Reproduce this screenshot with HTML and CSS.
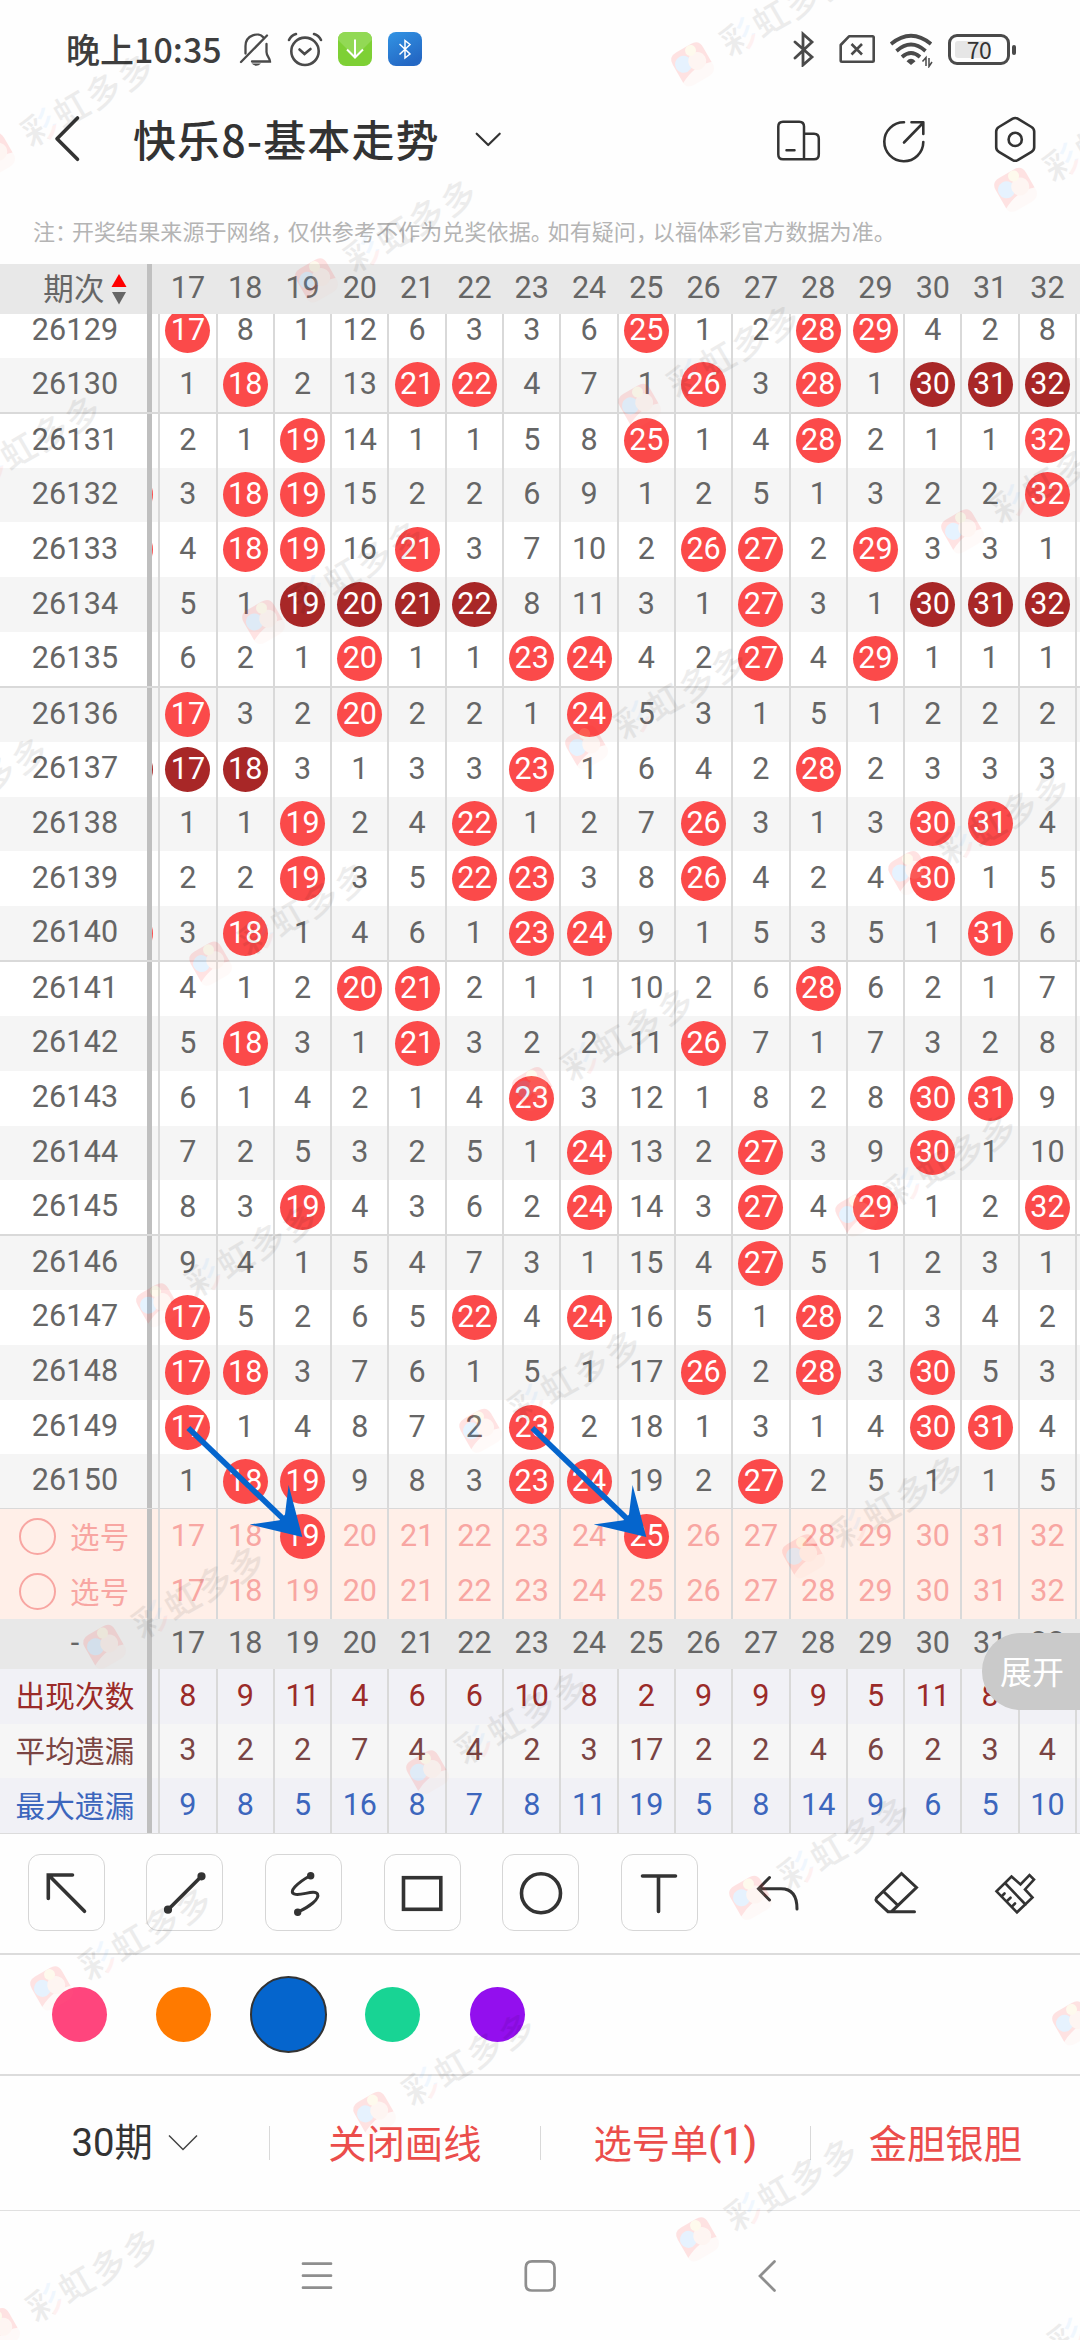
FILE: index.html
```html
<!DOCTYPE html>
<html lang="zh-CN">
<head>
<meta charset="utf-8">
<title>快乐8-基本走势</title>
<link rel="stylesheet" href="styles.css">
</head>
<body>
<div class="screen">
  <header class="status">
    <span class="clock">晚上10:35</span>
    <svg class="s-bell" width="36" height="38" viewBox="238 30 36 38" fill="none" stroke="#4a4a4a" stroke-width="2.3" stroke-linecap="round"><path d="M241 62 267 35.5M245.500 53.500V46C245.500 34.500 259 32 263 37M266.500 44V52C266.500 56 270 58 270 61.500H252"/><path d="M251.500 63.500H261Q256.300 68 251.500 63.500Z" fill="#4a4a4a" stroke="none"/></svg>
    <svg class="s-alarm" width="38" height="38" viewBox="286 31 38 38" fill="none" stroke="#4a4a4a" stroke-width="2.6" stroke-linecap="round"><circle cx="305" cy="52.300" r="13.700"/><path d="M299.500 50.500 304.500 55 310.500 50M289 41 Q291 36.500 296 35M321 41Q319 36.500 314 35"/></svg>
    <svg class="s-down" width="34" height="34" viewBox="0 0 34 34"><rect width="34" height="34" rx="8" fill="#7ed035"/><path d="M0 8Q0 0 8 0H26Q34 0 34 8L17 25Z" fill="#92d955"/><path d="M17 7.500V25M9 17.500 17 25.500 25 17.500" fill="none" stroke="#fff" stroke-width="2"/></svg>
    <svg class="s-bt" width="34" height="34" viewBox="0 0 34 34"><defs><linearGradient id="btg" x2="0.500" y2="1"><stop stop-color="#3294e4"/><stop offset="1" stop-color="#2468c4"/></linearGradient></defs><rect width="34" height="34" rx="8" fill="url(#btg)"/><path d="M11.500 12 22 22 17 26V8.500L22 12.500 11.500 22.500" fill="none" stroke="#fff" stroke-width="1.500"/></svg>
    <svg class="s-bt2" width="26" height="36" viewBox="790 31 26 36" fill="none" stroke="#4a4a4a" stroke-width="2.800" stroke-linecap="round"><path d="M795 42 812 57 803 65V34L812 42 795 58"/></svg>
    <svg class="s-sim" width="38" height="30" viewBox="838 34 38 30" fill="none" stroke="#4a4a4a" stroke-width="2.600" stroke-linejoin="round"><path d="M849 36.300H872.500Q873.700 36.300 873.700 37.500V60.500Q873.700 61.700 872.500 61.700H842Q840.700 61.700 840.700 60.500V45ZM851.500 44 862 54.500M862 44 851.500 54.500"/></svg>
    <svg class="s-wifi" width="44" height="36" viewBox="889 32 44 36" fill="none" stroke="#4a4a4a" stroke-width="3.700"><path d="M891 44Q911 27.500 931 44M896.500 51Q911 38 925.500 51M902 57Q911 49 920 57"/><path d="M906.500 61.200Q911 56.500 915.500 61.200L911 65Z" fill="#4a4a4a" stroke="none"/><path d="M926 66V57.500L922.500 61.500M929 58V66.500L932 62" stroke-width="1.500"/></svg>
    <div class="battery"><i></i><b>70</b></div>
  </header>

  <nav class="titlebar">
    <svg class="t-back" width="30" height="50" viewBox="52 114 30 50" fill="none" stroke="#333" stroke-width="3.600" stroke-linecap="round" stroke-linejoin="round"><path d="M77.500 118 57 138.700 77.500 159.300"/></svg>
    <h1>快乐8-基本走势</h1>
    <svg class="t-down" width="28" height="20" viewBox="474 128 28 20" fill="none" stroke="#333" stroke-width="2.200" stroke-linecap="round" stroke-linejoin="round"><path d="M476.700 132.700 488.200 144 499.700 132.700"/></svg>
    <svg class="t-phone" width="46" height="46" viewBox="775 117 46 46" fill="none" stroke="#333" stroke-width="2.500" stroke-linecap="round"><path d="M804 159.300H783Q778.300 159.300 778.300 154.500V126.500Q778.300 121.700 783 121.700H799.300Q804 121.700 804 126.500ZM804 133.700H814Q818.800 133.700 818.800 138.500V154.500Q818.800 159.300 814 159.300H802M786.500 150.300H794.500"/></svg>
    <svg class="t-share" width="46" height="46" viewBox="881 117 46 46" fill="none" stroke="#333" stroke-width="2.600" stroke-linecap="round" stroke-linejoin="round"><path d="M904 122.300A19.500 19.500 0 1 0 923.300 142M904 142.500 922.500 123.500M911.500 122.300H923.300V134"/></svg>
    <svg class="t-set" width="46" height="50" viewBox="992 114 46 50" fill="none" stroke="#333" stroke-width="2.600" stroke-linejoin="round"><path d="M1012.700 118.700Q1015.200 117.300 1017.700 118.700L1031.500 127Q1034.200 128.600 1034.200 131.500V147.300Q1034.200 150.200 1031.500 151.800L1017.700 160.100Q1015.200 161.500 1012.700 160.100L998.900 151.800Q996.200 150.200 996.200 147.300V131.500Q996.200 128.600 998.900 127Z"/><circle cx="1015.200" cy="139.400" r="6.600"/></svg>
  </nav>

  <p class="notice">注<s>：</s>开奖结果来源于网络<s>，</s>仅供参考不作为兑奖依据<s>。</s>如有疑问<s>，</s>以福体彩官方数据为准。</p>

  <main class="chart">
    <div class="row head">
      <div class="label">期次<svg class="sort" width="16" height="31" viewBox="0 0 16 31"><path d="M8 0 15.500 13H.5Z" fill="#f00"/><path d="M8 30.500 15 18H1Z" fill="#666"/></svg></div>
      <div class="cells" id="head"></div>
    </div>
    <div class="body"><div class="rows" id="rows"></div></div>
    <div id="picks"></div>
    <div class="row head foot"><div class="label">-</div><div class="cells" id="foot"></div></div>
    <div id="stats"></div>
    <svg class="drawing" width="1080" height="1570" viewBox="0 264 1080 1570">
      <defs><g id="arrow"><path d="M188.300 1428 288 1523.500" stroke="#0565cd" stroke-width="5.600"/><path d="M302.300 1537 249.700 1524.500 279.500 1520.300 285 1514.500 288.600 1485Z" fill="#0565cd"/></g></defs>
      <use href="#arrow"/><use href="#arrow" x="344"/>
    </svg>
    <button class="expand">展开</button>
  </main>

  <section class="tools">
    <div><span class="box"><svg width="46" height="46" viewBox="43 1870 46 46"><path d="M84.500 1911.300 49 1875.500M48.300 1898.500V1875H72.500"/></svg></span></div>
    <div><span class="box"><svg width="46" height="46" viewBox="162 1870 46 46"><path d="M168 1909.700 201.500 1876.300"/><circle cx="168" cy="1909.700" r="2.300"/><circle cx="201.500" cy="1876.300" r="2.300"/></svg></span></div>
    <div><span class="box"><svg width="46" height="46" viewBox="281 1870 46 46"><path stroke-width="3" d="M310.500 1875.500C297 1883 288 1892 294.500 1894C300 1896.500 315 1889 317.500 1894C320 1899 309 1907 298 1912"/><circle cx="310.700" cy="1875.700" r="1.900"/><circle cx="297.700" cy="1912.300" r="1.900"/></svg></span></div>
    <div><span class="box"><svg width="46" height="46" viewBox="399 1870 46 46"><rect x="403.500" y="1877.700" width="37.300" height="31.600"/></svg></span></div>
    <div><span class="box"><svg width="46" height="46" viewBox="518 1870 46 46"><circle class="ring" cx="541" cy="1893.300" r="19.500"/></svg></span></div>
    <div><span class="box"><svg width="46" height="46" viewBox="636 1870 46 46"><path d="M642.500 1876H675.500M658.500 1876V1911.500"/></svg></span></div>
    <div><svg width="46" height="46" viewBox="755 1870 46 46"><path stroke-width="3" d="M769.500 1877.500 758.500 1888.700 769.500 1900M759 1888.700H781Q797 1888.700 797 1909"/></svg></div>
    <div><svg width="48" height="48" viewBox="873 1869 48 48"><path stroke-width="3" d="M901.500 1873.500 916.500 1887.500 891.500 1911.700H888L876.500 1901Q875.500 1899.500 876.500 1898ZM883.500 1891.500 898 1905.500M891 1911.700H914.500"/></svg></div>
    <div><svg width="48" height="48" viewBox="991 1869 48 48"><path stroke-width="2.600" d="M1011.500 1876.500 1020.500 1884.500 1029.500 1875 1034 1879.500 1025 1889.500 1032.500 1897.500 1017 1912.300 996.500 1891.300ZM1005 1883 1025.500 1904.500M1001.500 1896.500 1004.500 1893.500M1006.500 1901.500 1010.500 1897.700M1011.700 1906.800 1015 1903.500"/></svg></div>
  </section>

  <section class="colors">
    <i class="pink"></i><i class="orange"></i><i class="blue"></i><i class="green"></i><i class="purple"></i>
  </section>

  <section class="actions">
    <div class="period">30期<svg width="30" height="18" viewBox="0 0 30 18" fill="none" stroke="#444" stroke-width="1.500"><path d="M1 1.500 15 15.500 29 1.500"/></svg></div>
    <div>关闭画线</div>
    <div>选号单<b>(1)</b></div>
    <div>金胆银胆</div>
  </section>

  <footer class="sysnav">
    <svg width="32" height="34" viewBox="301 2258 32 34"><path d="M303 2262.700H331M303 2274.700H331M303 2286.700H331"/></svg>
    <svg width="34" height="34" viewBox="523 2258 34 34"><path d="M532 2260.300H548Q554.500 2260.300 554.500 2266.500V2283.500Q554.500 2289.500 548 2289.500H532Q525.800 2289.500 525.800 2283.500V2266.500Q525.800 2260.300 532 2260.300Z"/></svg>
    <svg width="22" height="34" viewBox="756 2258 22 34"><path d="M774.500 2260.500 760 2275 774.500 2289.500"/></svg>
  </footer>

  <svg class="watermark" width="1080" height="2340" viewBox="0 0 1080 2340">
    <defs>
      <pattern id="cai" patternUnits="userSpaceOnUse" x="0" y="-60" width="200" height="120">
        <rect width="200" height="120" fill="#000"/>
        <rect x="56" width="18" height="65" fill="#3c9cff"/>
        <rect x="56" y="65" width="18" height="55" fill="#ff4a4a"/>
      </pattern>
      <g id="mark">
        <g opacity="0.130">
          <path d="M-17-9Q-17-18-8-18H9Q18-18 18-9V8Q2 2-17 12Z" fill="#ff3030"/>
          <path d="M-17 12Q2 2 18 8V12Q16 19 8 19H-8Q-17 19-17 12Z" fill="#ff9a80" opacity="0.350"/>
          <circle cx="-7.500" cy="-4" r="8.500" fill="#4aa8ff"/>
          <circle cx="6" cy="0" r="9" fill="#ffc0a8"/>
          <circle cx="5.500" cy="-12.500" r="5.500" fill="#ffe080"/>
        </g>
        <g class="mark-text" opacity="0.065"><text x="36" y="13" fill="url(#cai)">彩</text><text x="73" y="13">虹多多</text></g>
      </g>
    </defs>
    <g id="marks"></g>
  </svg>
</div>
<script src="chart.js"></script>
</body>
</html>
```

FILE: styles.css
```css
* { box-sizing: border-box; }
body { margin: 0; background: #fefefe; font-family: Roboto, "Noto Sans CJK SC", sans-serif; color: #333; }
.screen { position: relative; width: 1080px; height: 2340px; overflow: hidden; display: flex; flex-direction: column; }
svg { display: block; flex: none; }

.status { height: 98px; display: flex; align-items: center; padding-left: 66px; flex: none; }
.clock { font: 500 34px/50px "Noto Sans CJK SC", sans-serif; color: #3e3e3e; width: 172px; }
.s-alarm { margin-left: 12px; }
.s-down { margin-left: 14px; }
.s-bt { margin-left: 16px; }
.s-bt2 { margin-left: 368px; }
.s-sim { margin-left: 22px; }
.s-wifi { margin-left: 13px; margin-top: 2px; }
.battery { position: relative; margin-left: 15px; width: 62px; height: 31px; border: 3px solid #4a4a4a; border-radius: 9px; display: flex; align-items: center; justify-content: center; }
.battery::after { content: ""; position: absolute; left: 61px; top: 8px; width: 4px; height: 10px; border-radius: 2px; background: #4a4a4a; }
.battery i { position: absolute; left: 4px; top: 4px; width: 35px; height: 17px; border-radius: 3px; background: #e6e6e6; }
.battery b { position: relative; font: 400 23px/24px "Noto Sans CJK SC", sans-serif; letter-spacing: -.5px; }

.titlebar { height: 82px; display: flex; align-items: center; padding-left: 52px; flex: none; }
.titlebar h1 { margin: -3px 0 0 51px; width: 341px; font: 500 43px/60px "Noto Sans CJK SC", sans-serif; letter-spacing: 1.1px; white-space: nowrap; }
.t-phone { margin-left: 273px; margin-top: 2px; }
.t-share { margin-left: 60px; margin-top: 2px; }
.t-set { margin-left: 65px; }

.notice { margin: 0; height: 84px; padding: 32.500px 0 0 33px; font: 400 22px/34px "Noto Sans CJK SC", sans-serif; letter-spacing: .1px; color: #b4b4b4; white-space: nowrap; flex: none; }
.notice s { text-decoration: none; letter-spacing: -5.200px; }

.chart { position: relative; height: 1570px; flex: none; border-bottom: 2px solid #dcdcdc; font-size: 30.500px; color: #666; }
.row { display: flex; height: 54.830px; background: #fff; }
.row:nth-child(even) { background: #f5f5f5; }
.rows .row:nth-child(5n+2) { border-bottom: 1px solid #d9d9d9; }
.rows .row:nth-child(5n+3) { border-top: 1px solid #d9d9d9; }
.label { flex: none; width: 152px; border-right: 5px solid #bfbfbf; display: flex; align-items: center; justify-content: center; padding: 0 0 3px 3px; letter-spacing: .2px; }
.cells { flex: 1; overflow: hidden; display: grid; grid-template-columns: 6.300px repeat(17, 57.300px); }
.cells > span { min-width: 0; border-left: 2px solid #d9d9d9; display: flex; align-items: center; justify-content: center; padding-bottom: 2px; }
.cells > span:first-child { border: 0; overflow: hidden; justify-content: flex-end; }
.cells > span:first-child .ball { margin-right: 5.200px; }
.ball { flex: none; width: 45px; height: 45px; margin-top: 2px; padding-bottom: 2px; border-radius: 50%; background: #fb4a4a; color: #fff; display: flex; align-items: center; justify-content: center; }
.ball.run { background: #a82727; }
.body { height: 1195.700px; overflow: hidden; }
.rows { margin-top: -10.600px; }

.row.head { height: 49.700px; background: #e8e8e8; }
.head .label { border-color: #c0c0c0; }
.row.head:first-child .label { padding-left: 23px; }
.head .cells > span { border-color: transparent; padding-bottom: 2px; }
.head .cells > span:first-child { border: 0; }
.sort { margin-left: 6px; margin-top: 4px; }

.pick, .pick.row:nth-child(even) { background: #ffefe8; color: #f8a6a2; }
.pick .label { justify-content: flex-start; padding-left: 18.500px; gap: 14.500px; }
.pick i { width: 37px; height: 37px; margin-top: 3px; border: 2px solid #f8a6a2; border-radius: 50%; }
.pick .label { font-size: 29.500px; }

.stat.row { background: #f1f1f6; color: #9b2b29; }
.stat.row:nth-child(2) { background: #f6f6f6; color: #7a4443; }
.stat.row:nth-child(3) { color: #3c66bd; }
.stat .label { font-size: 29.600px; }

.drawing { position: absolute; left: 0; top: 0; }
.expand { position: absolute; z-index: 2; right: 0; top: 1369px; width: 98px; height: 77px; padding: 0 0 3px 2px; border: 0; border-radius: 38px 0 0 38px; background: #cacaca; color: #fff; font: 400 32px/40px "Noto Sans CJK SC", sans-serif; }

.tools { height: 121px; flex: none; display: flex; align-items: center; padding: 0 5.500px 2px 7px; border-bottom: 2px solid #dcdcdc; }
.tools > div { flex: 1; display: flex; justify-content: center; }
.box { width: 77px; height: 77px; border: 1px solid #d6d6d6; border-radius: 12px; display: flex; align-items: center; justify-content: center; }
.tools svg { fill: none; stroke: #333; stroke-width: 3.600; stroke-linecap: round; }
.tools circle:not(.ring) { fill: #333; }

.colors { height: 121px; flex: none; display: flex; align-items: center; padding-left: 27px; border-bottom: 2px solid #dcdcdc; }
.colors i { width: 55px; height: 55px; border-radius: 50%; margin: 0 24.750px; }
.colors .blue { width: 77px; height: 77px; margin: 0 13.750px; background: #0565cd; border: 2px solid #333; }
.pink { background: #ff457d; }
.orange { background: #ff7a00; }
.green { background: #18d494; }
.purple { background: #930fee; }

.actions { height: 135px; flex: none; display: flex; align-items: center; border-bottom: 1px solid #e0e0e0; font: 400 38.300px/60px "Noto Sans CJK SC", sans-serif; color: #eb4d4b; }
.actions > div { flex: 1; height: 34px; padding-bottom: 3px; display: flex; align-items: center; justify-content: center; border-left: 1px solid #d9d9d9; }
.actions > .period { border: 0; padding-bottom: 0; color: #333; font-family: Roboto, "Noto Sans CJK SC", sans-serif; gap: 15px; }
.actions b { font-weight: 500; font-family: Roboto, sans-serif; }

.sysnav { flex: 1; display: flex; align-items: center; padding-left: 301px; }
.sysnav svg { fill: none; stroke: #8e8e8e; stroke-width: 2.700; stroke-linecap: round; margin-right: 190px; }
.sysnav svg:nth-child(2) { margin-right: 199px; }

.watermark { position: absolute; left: 0; top: 0; z-index: 1; pointer-events: none; }
.mark-text { font: 500 35px "Noto Sans CJK SC", sans-serif; letter-spacing: 2px; }
```

FILE: chart.js
```js
// A value equal to its column number is a drawn ball; "*" marks a run of balls.
const first = 17;
const draws = `
26129|17 8 1 12 6 3 3 6 25 1 2 28 29 4 2 8
26130|1 18 2 13 21 22 4 7 1 26 3 28 1 30* 31* 32*
26131|2 1 19 14 1 1 5 8 25 1 4 28 2 1 1 32
26132|3 18 19 15 2 2 6 9 1 2 5 1 3 2 2 32|ball
26133|4 18 19 16 21 3 7 10 2 26 27 2 29 3 3 1|ball
26134|5 1 19* 20* 21* 22* 8 11 3 1 27 3 1 30* 31* 32*
26135|6 2 1 20 1 1 23 24 4 2 27 4 29 1 1 1
26136|17 3 2 20 2 2 1 24 5 3 1 5 1 2 2 2
26137|17* 18* 3 1 3 3 23 1 6 4 2 28 2 3 3 3|ball run
26138|1 1 19 2 4 22 1 2 7 26 3 1 3 30 31 4
26139|2 2 19 3 5 22 23 3 8 26 4 2 4 30 1 5
26140|3 18 1 4 6 1 23 24 9 1 5 3 5 1 31 6|ball
26141|4 1 2 20 21 2 1 1 10 2 6 28 6 2 1 7
26142|5 18 3 1 21 3 2 2 11 26 7 1 7 3 2 8
26143|6 1 4 2 1 4 23 3 12 1 8 2 8 30 31 9
26144|7 2 5 3 2 5 1 24 13 2 27 3 9 30 1 10
26145|8 3 19 4 3 6 2 24 14 3 27 4 29 1 2 32
26146|9 4 1 5 4 7 3 1 15 4 27 5 1 2 3 1
26147|17 5 2 6 5 22 4 24 16 5 1 28 2 3 4 2
26148|17 18 3 7 6 1 5 1 17 26 2 28 3 30 5 3
26149|17 1 4 8 7 2 23 2 18 1 3 1 4 30 31 4
26150|1 18 19 9 8 3 23 24 19 2 27 2 5 1 1 5`.trim().split("\n");

const cells = (values, isBall, edge) =>
  `<span>${edge ? `<b class="${edge}"></b>` : ""}</span>` +
  values.map((v, i) => {
    const text = v.replace("*", "");
    const cls = v.endsWith("*") ? "ball run" : "ball";
    return `<span>${isBall(text, first + i) ? `<div class="${cls}">${text}</div>` : text}</span>`;
  }).join("") + "<span></span>".repeat(17 - values.length);
const row = (cls, label, inner) =>
  `<div class="row ${cls}"><div class="label">${label}</div><div class="cells">${inner}</div></div>`;
const never = () => false;
const numbers = Array.from({ length: 16 }, (_, i) => String(first + i));
const put = (id, html) => { document.getElementById(id).innerHTML = html; };

put("head", cells(numbers, never));
put("foot", cells(numbers, never));
put("rows", draws.map(line => {
  const [issue, values, edge] = line.split("|");
  return row("", issue, cells(values.split(" "), (t, n) => Number(t) === n, edge));
}).join(""));
put("picks", [["19", "25"], []].map(chosen =>
  row("pick", "<i></i>选号", cells(numbers, t => chosen.includes(t)))).join(""));
put("stats", [
  ["出现次数", "8 9 11 4 6 6 10 8 2 9 9 9 5 11 8"],
  ["平均遗漏", "3 2 2 7 4 4 2 3 17 2 2 4 6 2 3 4"],
  ["最大遗漏", "9 8 5 16 8 7 8 11 19 5 8 14 9 6 5 10"]
].map(([label, v]) => row("stat", label, cells(v.split(" "), never))).join(""));

let marks = "";
for (let j = -1; j < 8; j++) {
  for (let i = -3; i < 5; i++) {
    const x = 692 + i * 323 - j * 53;
    const y = 64 + i * 125.5 + j * 341.6;
    if (x > -170 && x < 1110 && y > -40 && y < 2440) {
      marks += `<use href="#mark" transform="translate(${x} ${y}) rotate(-30)"/>`;
    }
  }
}
put("marks", marks);
```
